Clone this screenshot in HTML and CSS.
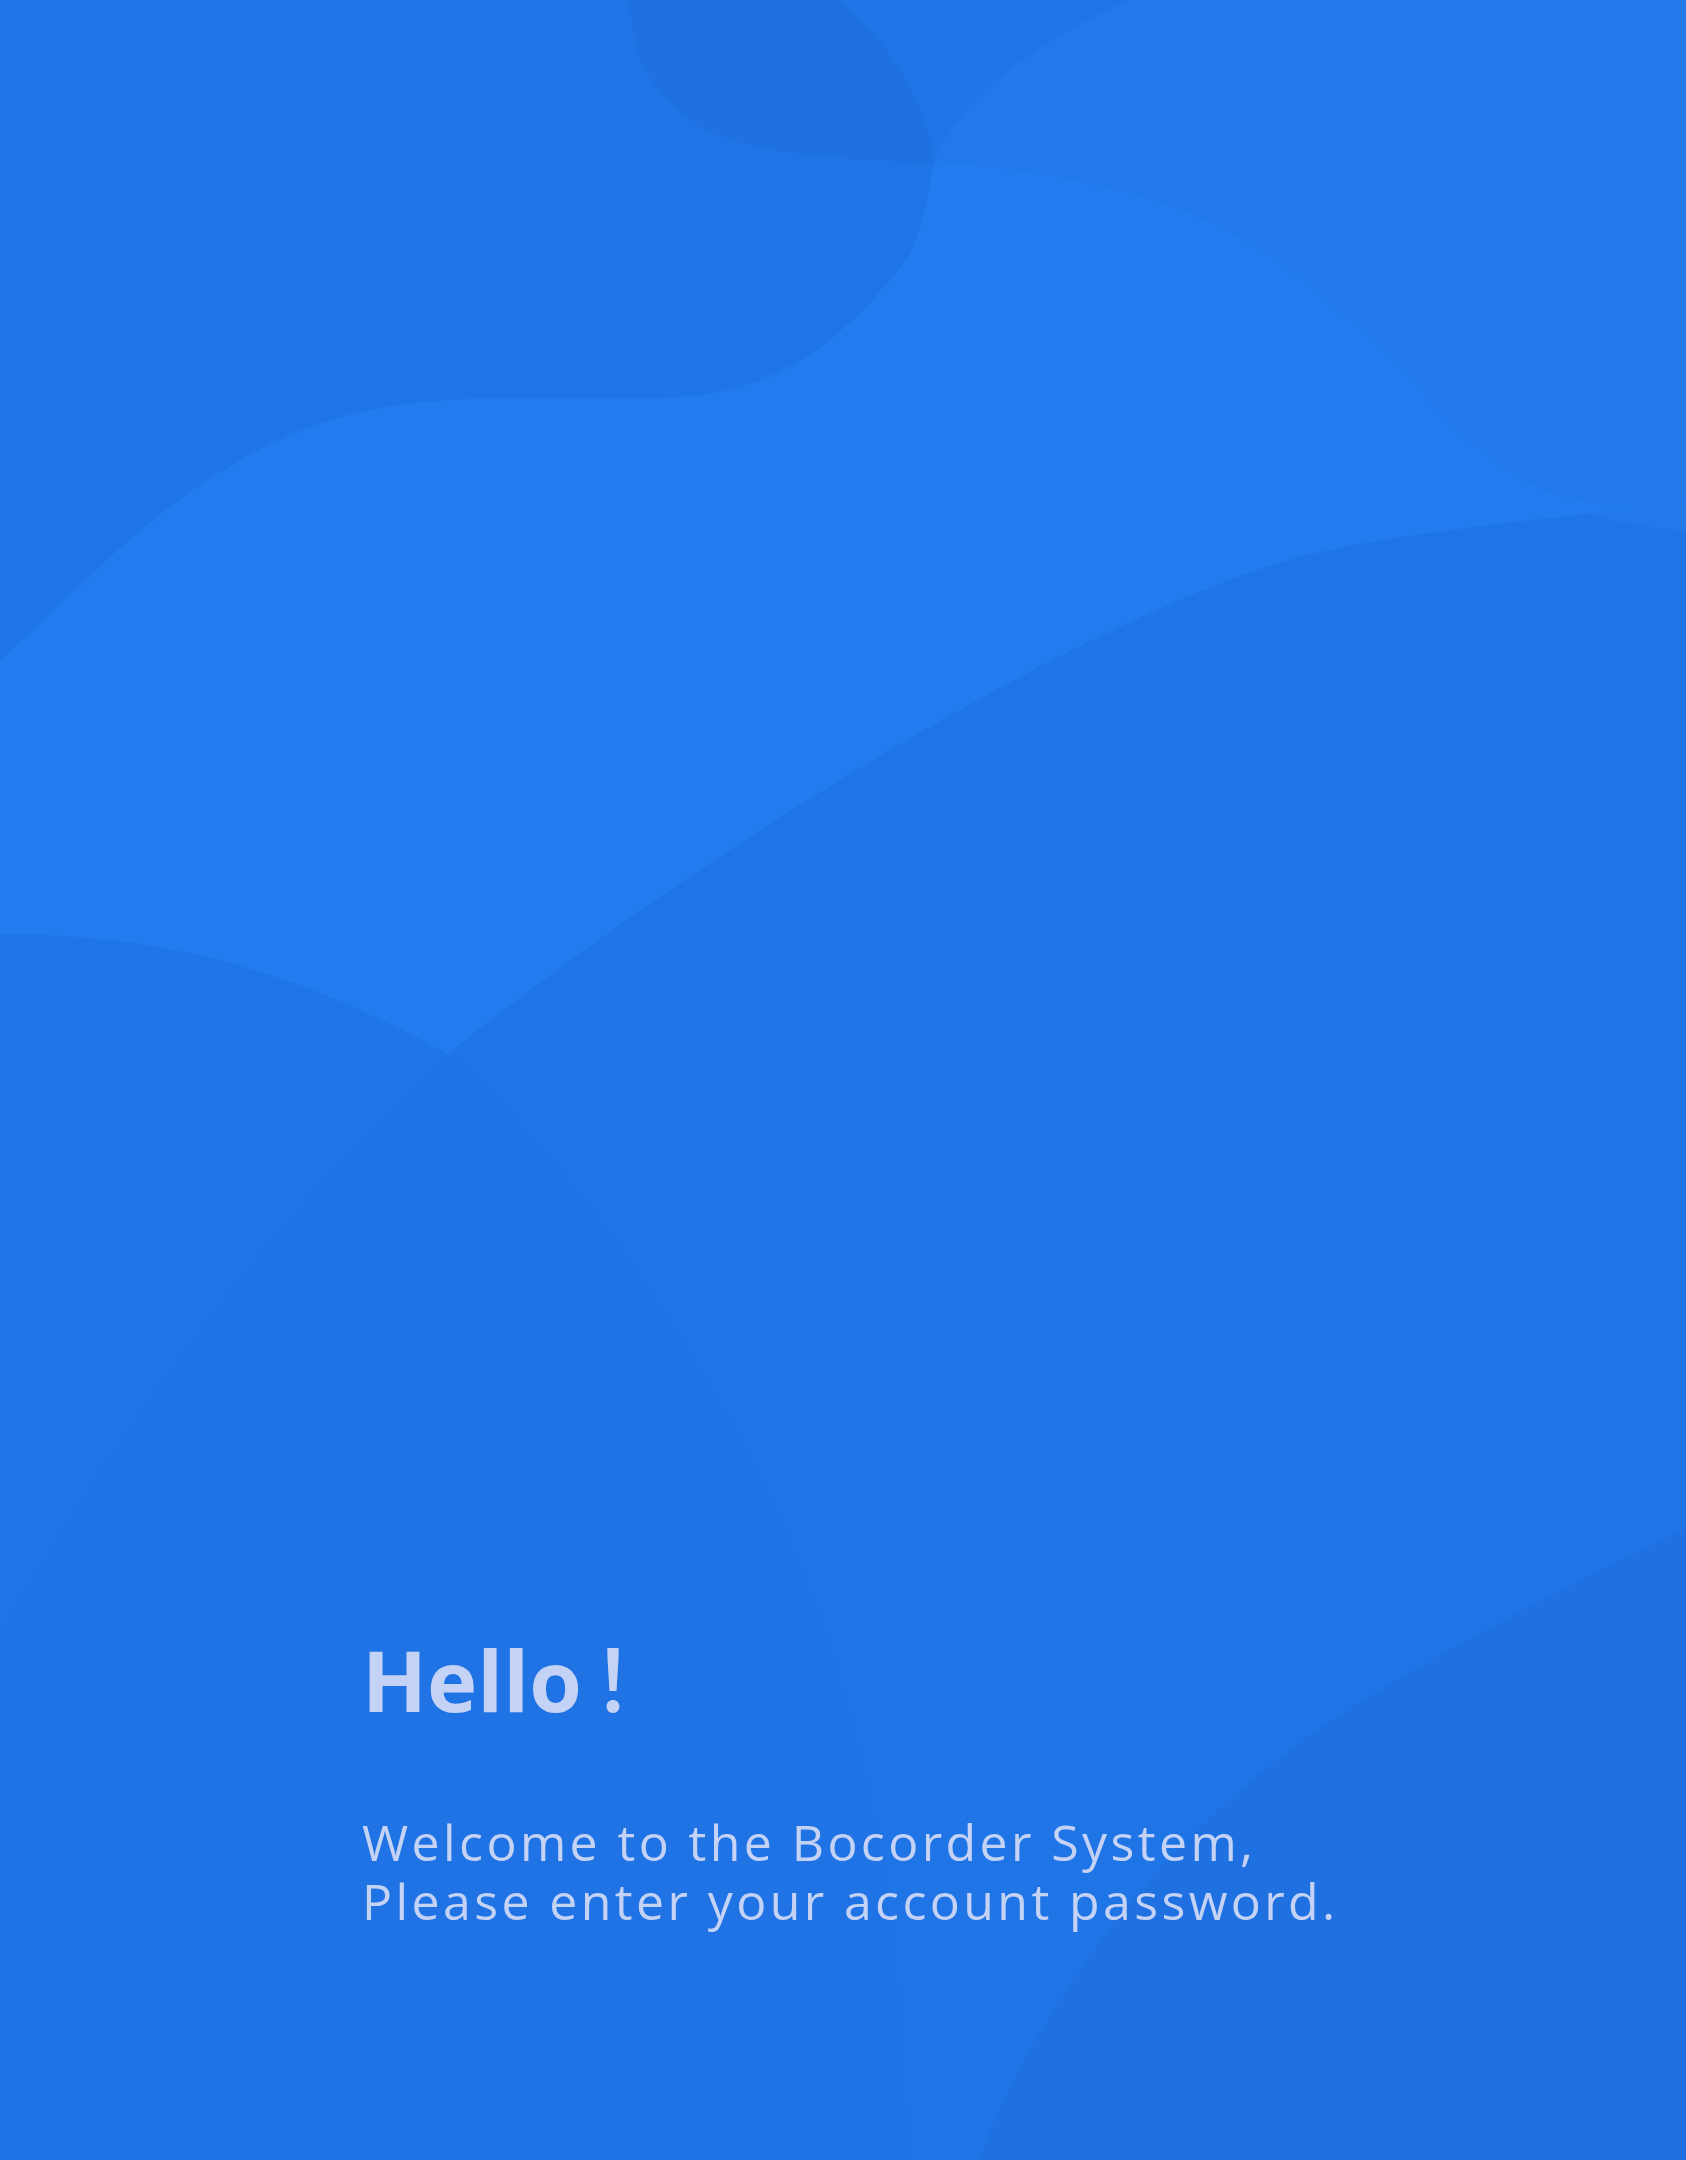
FILE: index.html
```html
<!DOCTYPE html>
<html lang="en">
<head>
<meta charset="utf-8">
<title>Bocorder System</title>
<link rel="stylesheet" href="styles.css">
</head>
<body>
<main class="login-side">
  <svg class="waves" viewBox="0 0 1686 2160" preserveAspectRatio="none" aria-hidden="true">
    <path class="w-topright" d="M1129,0 L1686,0 L1686,530 C1600,525 1540,505 1470,440 C1380,350 1300,250 1170,205 C1090,178 1000,165 935,162 C950,110 1020,50 1129,0 Z"/>
    <path class="w-band" d="M0,661 C90,580 180,470 330,420 C450,385 560,405 680,397 C790,390 850,330 905,262 C925,230 928,185 935,162 C1000,165 1090,178 1170,205 C1300,250 1380,350 1470,440 C1540,505 1600,512 1686,500 C1560,520 1400,530 1295,558 C1080,620 700,850 448,1054 C330,990 200,934 0,934 Z"/>
    <path class="w-blob" d="M629,0 C632,50 645,90 699,126 C740,150 820,160 935,163 C925,110 900,50 839,0 Z"/>
    <path class="w-hill" d="M0,1631 C100,1460 250,1230 452,1053 C560,1150 700,1330 800,1560 C880,1760 905,1950 909,2160 L0,2160 Z"/>
    <path class="w-corner" d="M1686,1529 C1560,1590 1420,1660 1309,1736 C1180,1830 1060,1960 978,2160 L1686,2160 Z"/>
  </svg>
  <section class="intro">
    <h1 class="intro-title">Hello<span class="bang">！</span></h1>
    <p class="intro-line">Welcome to the Bocorder System,</p>
    <p class="intro-line">Please enter your account password.</p>
  </section>
</main>
</body>
</html>
```
FILE: styles.css
```css
html, body {
  margin: 0;
  padding: 0;
}

body {
  background: #2075e6;
  font-family: "Open Sans", "Noto Sans", "Noto Sans CJK SC", sans-serif;
}

.login-side {
  position: relative;
  width: 1686px;
  height: 2160px;
  overflow: hidden;
  background: #2075e6;
}

.waves {
  position: absolute;
  left: 0;
  top: 0;
  width: 1686px;
  height: 2160px;
  display: block;
}

.w-topright { fill: #2379ec; }
.w-band { fill: #237cef; }
.w-blob { fill: #1f71e1; }
.w-hill { fill: #2073e4; }
.w-corner { fill: #1f71e2; }

.intro {
  position: relative;
  display: flex;
  flex-direction: column;
  padding: 1625px 0 0 362px;
  color: #c4d3f5;
}

.intro-title {
  margin: 0 0 84px;
  font-size: 85px;
  line-height: 100px;
  font-weight: 700;
  letter-spacing: 0;
}

.bang {
  display: inline-block;
  margin-left: 10px;
  font-family: "Noto Sans CJK SC", sans-serif;
  font-weight: 500;
}

.intro-line {
  margin: 0;
  font-size: 50px;
  line-height: 59px;
  font-weight: 400;
  letter-spacing: 3.4px;
  white-space: nowrap;
}
```
